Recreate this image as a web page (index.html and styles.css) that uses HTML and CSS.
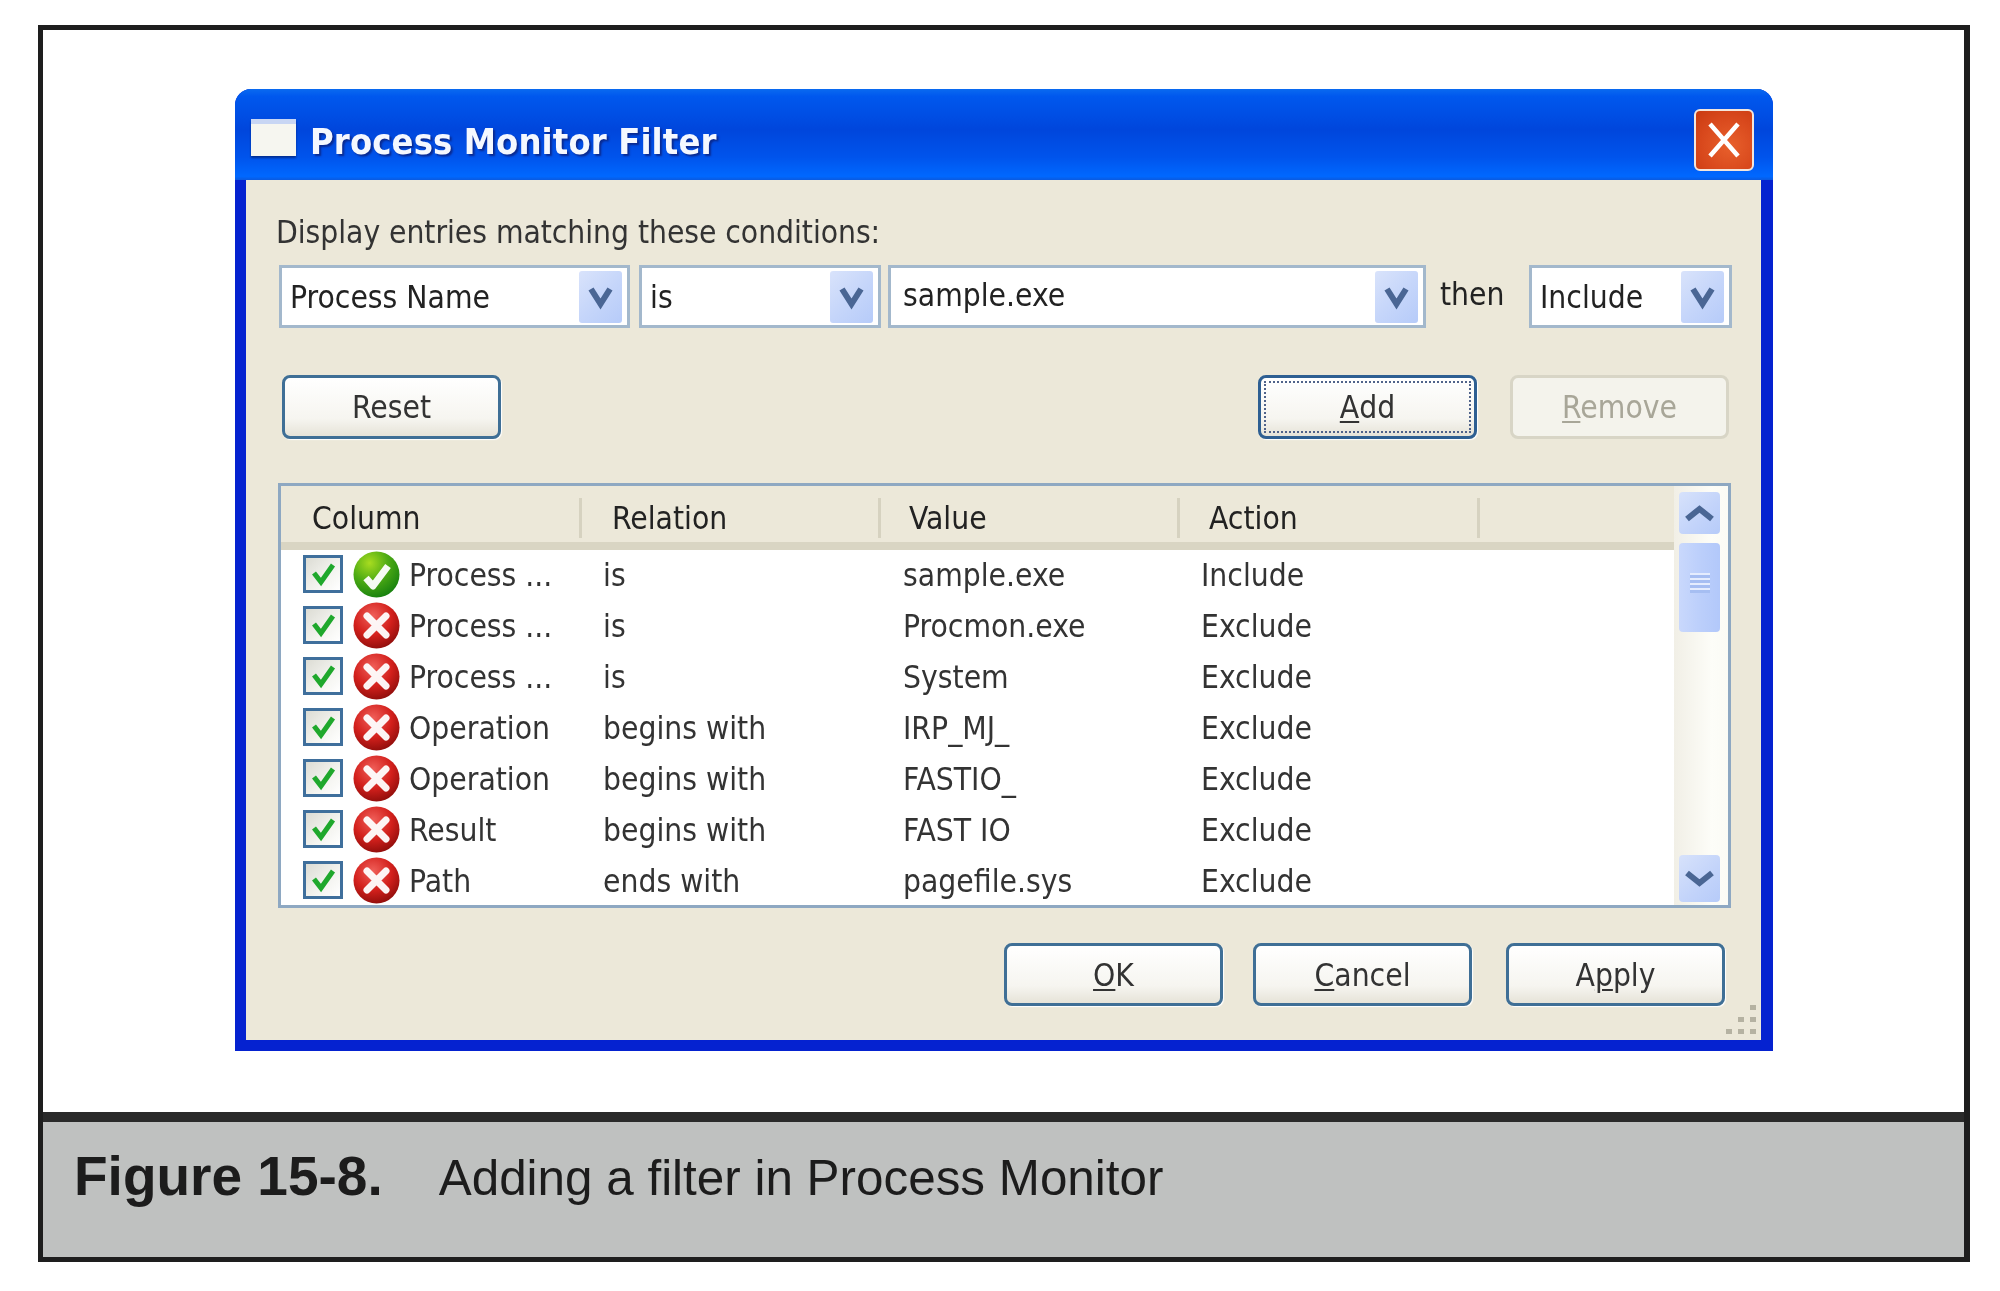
FILE: index.html
```html
<!DOCTYPE html>
<html lang="en">
<head>
    <meta charset="UTF-8">
    <title>Adding a filter in Process Monitor</title>
    <link rel="stylesheet" href="styles.css">
</head>
<body>
    <svg class="defs" width="0" height="0">
        <defs>
            <radialGradient id="redBall" cx="42%" cy="30%" r="75%">
                <stop offset="0" stop-color="#f0605a"/>
                <stop offset="0.55" stop-color="#d3201c"/>
                <stop offset="1" stop-color="#8a0c0a"/>
            </radialGradient>
            <radialGradient id="greenBall" cx="35%" cy="25%" r="80%">
                <stop offset="0" stop-color="#a8dc20"/>
                <stop offset="0.5" stop-color="#4eab14"/>
                <stop offset="1" stop-color="#16800f"/>
            </radialGradient>
            <symbol id="iconExclude" viewBox="0 0 47 47">
                <circle cx="23.5" cy="23.5" r="23" fill="url(#redBall)"/>
                <path d="M14 14 L33 33 M33 14 L14 33" stroke="#fff" stroke-width="7" stroke-linecap="round" opacity="0.95"/>
            </symbol>
            <symbol id="iconInclude" viewBox="0 0 47 47">
                <circle cx="23.5" cy="23.5" r="23" fill="url(#greenBall)"/>
                <path d="M13 27 L20 35 L35 15" fill="none" stroke="#fff" stroke-width="7" stroke-linejoin="round" opacity="0.95"/>
            </symbol>
            <symbol id="iconCheck" viewBox="0 0 40 38">
                <path d="M11 18 L18 27 L30 10" fill="none" stroke="#1fa82c" stroke-width="5"/>
            </symbol>
            <symbol id="iconDown" viewBox="0 0 43 52">
                <path d="M12 18 L21.5 33 L31 18" fill="none" stroke="#4a6694" stroke-width="6"/>
            </symbol>
            <symbol id="iconScrollDown" viewBox="0 0 41 47">
                <path d="M8 18 L20.5 28 L33 18" fill="none" stroke="#4a6694" stroke-width="6"/>
            </symbol>
            <symbol id="iconScrollUp" viewBox="0 0 41 42">
                <path d="M8 27 L20.5 17 L33 27" fill="none" stroke="#4a6694" stroke-width="6"/>
            </symbol>
        </defs>
    </svg>

    <div class="figure">
        <div class="figure-body">
            <div class="window">
                <div class="titlebar">
                    <span class="app-icon"></span>
                    <span class="title">Process Monitor Filter</span>
                    <span class="close">
                        <svg width="60" height="62" viewBox="0 0 60 62"><path d="M16 15 L44 47 M44 15 L16 47" stroke="#fff" stroke-width="4.5"/></svg>
                    </span>
                </div>
                <div class="client">
                    <div class="prompt">Display entries matching these conditions:</div>

                    <div class="filter-row">
                        <div class="combo combo-column"><span class="combo-text">Process Name</span><span class="drop"><svg width="43" height="52"><use href="#iconDown"/></svg></span></div>
                        <div class="combo combo-relation"><span class="combo-text">is</span><span class="drop"><svg width="43" height="52"><use href="#iconDown"/></svg></span></div>
                        <div class="combo combo-value"><span class="combo-text raised">sample.exe</span><span class="drop"><svg width="43" height="52"><use href="#iconDown"/></svg></span></div>
                        <span class="then">then</span>
                        <div class="combo combo-action"><span class="combo-text">Include</span><span class="drop"><svg width="43" height="52"><use href="#iconDown"/></svg></span></div>
                    </div>

                    <div class="button-row">
                        <button class="btn">Reset</button>
                        <div class="spacer"></div>
                        <button class="btn btn-focus"><span class="focus-ring"><u>A</u>dd</span></button>
                        <button class="btn btn-disabled"><u>R</u>emove</button>
                    </div>

                    <div class="list">
                        <div class="list-main">
                            <div class="list-header">
                                <div class="hcell hcell-column">Column</div>
                                <div class="hcell hcell-relation">Relation</div>
                                <div class="hcell hcell-value">Value</div>
                                <div class="hcell hcell-action">Action</div>
                            </div>
                            <div class="row">
                                <div class="cell-first"><span class="check"><svg width="40" height="38"><use href="#iconCheck"/></svg></span><svg class="status" width="47" height="47"><use href="#iconInclude"/></svg><span>Process ...</span></div>
                                <div>is</div><div>sample.exe</div><div>Include</div>
                            </div>
                            <div class="row">
                                <div class="cell-first"><span class="check"><svg width="40" height="38"><use href="#iconCheck"/></svg></span><svg class="status" width="47" height="47"><use href="#iconExclude"/></svg><span>Process ...</span></div>
                                <div>is</div><div>Procmon.exe</div><div>Exclude</div>
                            </div>
                            <div class="row">
                                <div class="cell-first"><span class="check"><svg width="40" height="38"><use href="#iconCheck"/></svg></span><svg class="status" width="47" height="47"><use href="#iconExclude"/></svg><span>Process ...</span></div>
                                <div>is</div><div>System</div><div>Exclude</div>
                            </div>
                            <div class="row">
                                <div class="cell-first"><span class="check"><svg width="40" height="38"><use href="#iconCheck"/></svg></span><svg class="status" width="47" height="47"><use href="#iconExclude"/></svg><span>Operation</span></div>
                                <div>begins with</div><div>IRP_MJ_</div><div>Exclude</div>
                            </div>
                            <div class="row">
                                <div class="cell-first"><span class="check"><svg width="40" height="38"><use href="#iconCheck"/></svg></span><svg class="status" width="47" height="47"><use href="#iconExclude"/></svg><span>Operation</span></div>
                                <div>begins with</div><div>FASTIO_</div><div>Exclude</div>
                            </div>
                            <div class="row">
                                <div class="cell-first"><span class="check"><svg width="40" height="38"><use href="#iconCheck"/></svg></span><svg class="status" width="47" height="47"><use href="#iconExclude"/></svg><span>Result</span></div>
                                <div>begins with</div><div>FAST IO</div><div>Exclude</div>
                            </div>
                            <div class="row">
                                <div class="cell-first"><span class="check"><svg width="40" height="38"><use href="#iconCheck"/></svg></span><svg class="status" width="47" height="47"><use href="#iconExclude"/></svg><span>Path</span></div>
                                <div>ends with</div><div>pagefile.sys</div><div>Exclude</div>
                            </div>
                        </div>
                        <div class="scrollbar">
                            <span class="sb-btn sb-up"><svg width="41" height="42"><use href="#iconScrollUp"/></svg></span>
                            <span class="sb-thumb"><span class="grip"></span></span>
                            <span class="sb-btn sb-down"><svg width="41" height="47"><use href="#iconScrollDown"/></svg></span>
                        </div>
                    </div>

                    <div class="footer-row">
                        <button class="btn"><u>O</u>K</button>
                        <button class="btn"><u>C</u>ancel</button>
                        <button class="btn">A<u>p</u>ply</button>
                    </div>

                    <svg class="resize-grip" width="30" height="30" viewBox="0 0 30 30">
                        <g fill="#b5b2a2">
                            <rect x="24" y="0" width="6" height="5"/>
                            <rect x="12" y="12" width="6" height="5"/><rect x="24" y="12" width="6" height="5"/>
                            <rect x="0" y="24" width="6" height="5"/><rect x="12" y="24" width="6" height="5"/><rect x="24" y="24" width="6" height="5"/>
                        </g>
                    </svg>
                </div>
            </div>
        </div>
        <div class="caption">
            <span class="caption-label">Figure 15-8.</span>
            <span class="caption-text">Adding a filter in Process Monitor</span>
        </div>
    </div>
</body>
</html>
```

FILE: styles.css
```css
/* General reset */
* {
    box-sizing: border-box;
    margin: 0;
    padding: 0;
}

body {
    background-color: #ffffff;
    color: #222;
    font-family: "DejaVu Sans Condensed", "DejaVu Sans", sans-serif;
    height: 1291px;
    overflow: hidden;
    padding: 25px 30px 0 38px;
}

.defs {
    display: block;
    height: 0;
}

/* Figure frame and caption */
.figure {
    border: 5px solid #1e1e1e;
    border-right-width: 6px;
    height: 1237px;
    display: flex;
    flex-direction: column;
    filter: blur(0.6px);
}

.figure-body {
    flex: 1;
    padding: 59px 191px 0 192px;
}

.caption {
    height: 145px;
    background-color: #bfc1c0;
    border-top: 10px solid #2a2a2a;
    padding: 19px 0 0 31px;
    font-family: "Liberation Sans", Arial, sans-serif;
    font-size: 49.4px;
    line-height: 70px;
    color: #1c1c1c;
    white-space: nowrap;
}

.caption-label {
    font-weight: bold;
    font-size: 55px;
    margin-right: 45px;
}

/* Window chrome */
.window {
    position: relative;
    height: 962px;
    border-radius: 16px 16px 0 0;
    background-color: #0522d0;
    display: flex;
    flex-direction: column;
}

.titlebar {
    height: 91px;
    flex: none;
    border-radius: 16px 16px 0 0;
    background: linear-gradient(to bottom, #0a6af0 0%, #0058ee 8%, #0046dc 45%, #0054ec 75%, #0068ff 96%, #0a5ae0 100%);
    display: flex;
    align-items: center;
    padding: 0 19px 0 16px;
}

.app-icon {
    width: 45px;
    height: 37px;
    margin-top: 5px;
    background-color: #f6f6f0;
    border-top: 5px solid #c8d6f4;
    box-shadow: 0 2px 2px rgba(0, 0, 40, 0.45);
}

.title {
    flex: 1;
    margin-left: 14px;
    margin-top: 14px;
    color: #f4f8ff;
    font-weight: bold;
    font-size: 36px;
    letter-spacing: 0.1px;
    text-shadow: 2px 2px 2px #0a2a90;
    white-space: nowrap;
}

.close {
    width: 60px;
    height: 62px;
    border: 2px solid #f4e6dc;
    border-radius: 6px;
    background: radial-gradient(circle at 60% 60%, #e8602c, #d8481c 60%, #c93a10);
    margin-top: 10px;
    overflow: hidden;
}

.close svg {
    display: block;
    margin: -2px;
}

.client {
    position: relative;
    flex: 1;
    margin: 0 12px 11px 11px;
    background-color: #ece8d9;
    padding: 32px 0 0 32px;
    font-size: 31.5px;
}

.prompt {
    height: 40px;
    line-height: 40px;
    margin-left: -2px;
    letter-spacing: -0.05px;
    color: #333;
    white-space: nowrap;
}

/* Filter combos */
.filter-row {
    display: flex;
    align-items: stretch;
    height: 63px;
    margin-top: 13px;
    margin-left: 1px;
}

.combo {
    display: flex;
    align-items: center;
    justify-content: space-between;
    background-color: #fff;
    border: 3px solid #a3b8cc;
    padding-right: 5px;
    padding-left: 8px;
}

.combo-column { width: 351px; margin-right: 9px; }
.combo-relation { width: 242px; margin-right: 7px; }
.combo-value { width: 538px; }
.combo-action { width: 203px; }

.combo-text {
    line-height: 40px;
    white-space: nowrap;
}

.combo-value .combo-text {
    margin-left: 4px;
}

.raised {
    margin-top: -4px;
}

.then {
    width: 103px;
    padding-left: 14px;
    line-height: 58px;
}

.drop {
    flex: none;
    width: 43px;
    height: 52px;
    border-radius: 3px;
    background: linear-gradient(135deg, #d9e3fb 0%, #c6d6fa 50%, #b6cbf9 100%);
}

.drop svg,
.sb-btn svg {
    display: block;
}

/* Buttons */
.button-row {
    display: flex;
    height: 64px;
    margin-top: 47px;
    margin-left: 4px;
    padding-right: 32px;
}

.spacer {
    flex: 1;
}

.btn {
    width: 219px;
    height: 64px;
    font-family: inherit;
    font-size: 31.5px;
    color: #333;
    border: 3px solid #3f6f96;
    border-radius: 8px;
    background: linear-gradient(to bottom, #ffffff 0%, #f6f5f0 70%, #e6e3d8 100%);
    box-shadow: 1px 1px 1px #fff;
}

.btn u {
    text-decoration-thickness: 2px;
    text-underline-offset: 3px;
}

.btn-focus {
    margin-right: 33px;
    padding: 3px;
    border-color: #2e5f92;
}

.focus-ring {
    display: flex;
    align-items: center;
    justify-content: center;
    height: 100%;
    border: 2px dotted #50638a;
}

.focus-ring u {
    margin-right: 0;
}

.btn-disabled {
    color: #a8a698;
    border-color: #d8d5c6;
    background: #f4f3ec;
    box-shadow: none;
}

/* Filter list */
.list {
    display: flex;
    width: 1453px;
    height: 425px;
    margin-top: 44px;
    border: 3px solid #8ea8c2;
    background-color: #fff;
    overflow: hidden;
}

.list-main {
    flex: 1;
}

.list-header {
    display: flex;
    height: 64px;
    background-color: #ece8d9;
    border-bottom: 8px solid #d9d5c3;
    padding-top: 12px;
}

.hcell {
    height: 40px;
    line-height: 40px;
    border-right: 3px solid #d6d2c0;
}

.hcell-column { width: 301px; padding-left: 31px; }
.hcell-relation { width: 299px; padding-left: 30px; }
.hcell-value { width: 299px; padding-left: 28px; }
.hcell-action { width: 300px; padding-left: 29px; }

.row {
    display: grid;
    grid-template-columns: 322px 300px 298px 1fr;
    height: 51px;
    align-items: center;
    line-height: 51px;
    color: #333;
    white-space: nowrap;
}

.cell-first {
    display: flex;
    align-items: center;
    padding-left: 22px;
}

.check {
    width: 40px;
    height: 38px;
    border: 3px solid #3f6f9c;
    background: linear-gradient(135deg, #dcdcd4 0%, #f4f4f0 60%, #ffffff 100%);
    margin: -3px 10px 0 0;
    flex: none;
}

.check svg {
    display: block;
    margin: -3px;
}

.status {
    flex: none;
    margin: -3px 9px 0 0;
}

/* Scrollbar */
.scrollbar {
    flex: none;
    width: 54px;
    display: flex;
    flex-direction: column;
    padding: 6px 8px 3px 5px;
    background: linear-gradient(to right, #f1efe6, #fdfdf8 70%, #fbfbf5);
}

.sb-btn {
    display: block;
    height: 42px;
    border-radius: 4px;
    background: linear-gradient(135deg, #d7e2fb, #c2d3fa 60%, #b6cbf9);
}

.sb-down {
    height: 47px;
    margin-top: auto;
}

.sb-thumb {
    display: flex;
    align-items: center;
    justify-content: center;
    height: 89px;
    margin-top: 9px;
    border-radius: 4px;
    background: linear-gradient(to right, #c9d8fc, #bccffb 50%, #b2c8fa);
}

.grip {
    width: 20px;
    height: 20px;
    margin-top: -10px;
    background: repeating-linear-gradient(to bottom, #e4ecfe 0, #e4ecfe 2px, #a6bef2 2px, #a6bef2 5px);
}

/* Bottom buttons */
.footer-row {
    display: flex;
    gap: 30px;
    margin-top: 35px;
    padding-left: 726px;
}

.footer-row .btn {
    height: 63px;
    width: 219px;
}

.footer-row .btn:last-child {
    margin-left: 4px;
}

.resize-grip {
    position: absolute;
    right: 5px;
    bottom: 5px;
}
```
